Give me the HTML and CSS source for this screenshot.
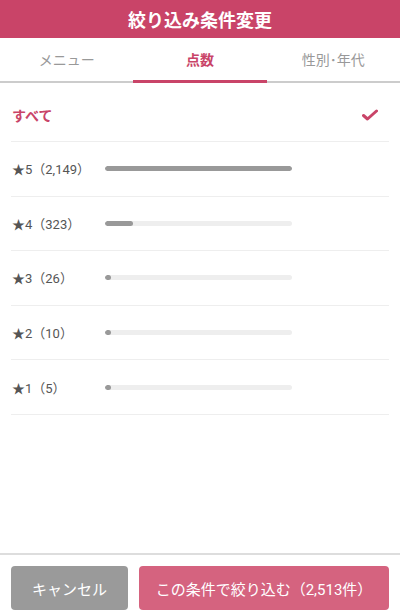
FILE: index.html
```html
<!DOCTYPE html>
<html lang="ja">
<head>
    <meta charset="UTF-8">
    <meta name="viewport" content="width=device-width, initial-scale=1.0">
    <title>絞り込み条件変更</title>
    <link rel="stylesheet" href="styles.css">
</head>
<body>
    <header class="title-bar">絞り込み条件変更</header>

    <nav class="tabs">
        <div class="tab">メニュー</div>
        <div class="tab active">点数</div>
        <div class="tab">性別･年代</div>
    </nav>

    <ul class="score-list">
        <li class="row all selected">
            <span>すべて</span>
            <svg class="check" width="16" height="12" viewBox="0 0 16 12">
                <path d="M1.5 6.5 L5.5 10 L14.5 2" fill="none" stroke="#c94468" stroke-width="3" stroke-linecap="round" stroke-linejoin="round"/>
            </svg>
        </li>
        <li class="row">
            <span class="label">★5（2,149）</span>
            <div class="bar"><div class="fill" style="width: 100%"></div></div>
        </li>
        <li class="row">
            <span class="label">★4（323）</span>
            <div class="bar"><div class="fill" style="width: 15%"></div></div>
        </li>
        <li class="row">
            <span class="label">★3（26）</span>
            <div class="bar"><div class="fill" style="width: 3%"></div></div>
        </li>
        <li class="row">
            <span class="label">★2（10）</span>
            <div class="bar"><div class="fill" style="width: 3%"></div></div>
        </li>
        <li class="row">
            <span class="label">★1（5）</span>
            <div class="bar"><div class="fill" style="width: 3%"></div></div>
        </li>
    </ul>

    <footer class="actions">
        <button class="btn cancel">キャンセル</button>
        <button class="btn apply">この条件で絞り込む（2,513件）</button>
    </footer>
</body>
</html>
```

FILE: styles.css
```css
* {
    box-sizing: border-box;
}
body {
    font-family: Roboto, "Noto Sans CJK JP", sans-serif;
    margin: 0;
    padding: 0;
    display: flex;
    flex-direction: column;
    height: 100vh;
    background-color: #fff;
    color: #555;
}
.title-bar {
    height: 38px;
    background-color: #c94468;
    color: #fff;
    font-size: 18px;
    font-weight: bold;
    display: flex;
    align-items: center;
    justify-content: center;
}
.tabs {
    display: flex;
    height: 45px;
    border-bottom: 2px solid #ccc;
}
.tab {
    flex: 1;
    display: flex;
    align-items: center;
    justify-content: center;
    font-size: 14px;
    color: #999;
    margin-bottom: -2px;
    border-bottom: 3px solid transparent;
}
.tab.active {
    color: #c94468;
    font-weight: bold;
    border-bottom-color: #c94468;
}
.score-list {
    flex: 1;
    list-style: none;
    margin: 0;
    padding: 0 11px;
}
.row {
    display: flex;
    align-items: center;
    height: 54.6px;
    border-bottom: 1px solid #eee;
    font-size: 13px;
}
.row.all {
    height: 59px;
    padding: 5px 0 0 1px;
    justify-content: space-between;
    color: #c94468;
    font-weight: bold;
    font-size: 14px;
}
.check {
    margin-right: 11px;
}
.label {
    width: 94px;
    padding-left: 1px;
    color: #555;
}
.bar {
    width: 187px;
    height: 5px;
    border-radius: 3px;
    background-color: #eee;
    overflow: hidden;
}
.fill {
    height: 100%;
    min-width: 5px;
    border-radius: 3px;
    background-color: #999;
}
.actions {
    display: flex;
    gap: 11px;
    padding: 11px 11px 1px;
    border-top: 2px solid #ddd;
}
.btn {
    height: 44px;
    border: none;
    border-radius: 4px;
    color: #fff;
    font-family: Roboto, "Noto Sans CJK JP", sans-serif;
    font-size: 15px;
    cursor: pointer;
}
.cancel {
    width: 117px;
    background-color: #9a9a9a;
}
.apply {
    flex: 1;
    background-color: #d5637f;
}
```
